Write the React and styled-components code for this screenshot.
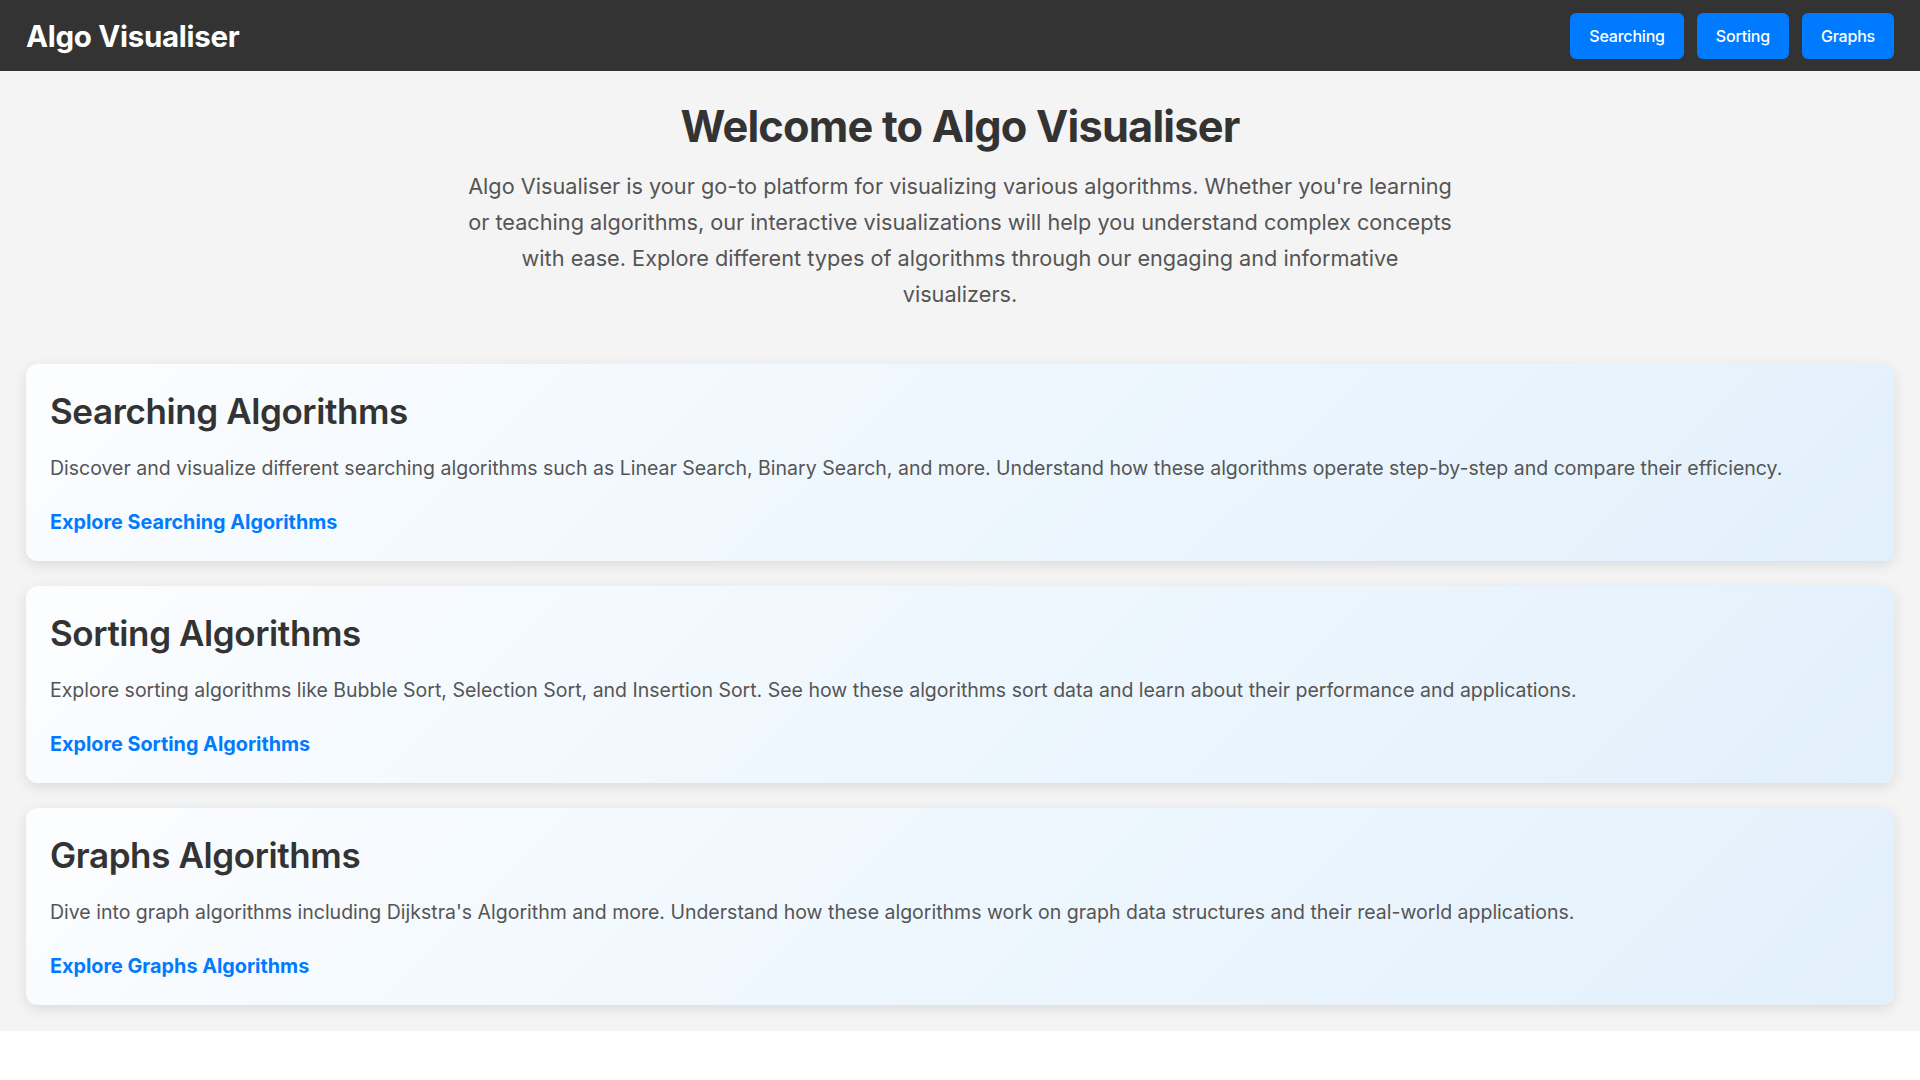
import React from "react";
import styled, { createGlobalStyle } from "styled-components";

const Global = createGlobalStyle`
  html, body { margin: 0; padding: 0; background: #ffffff; }
  body { font-family: Inter, "Noto Sans", sans-serif; color: #333; }
  * { box-sizing: border-box; }
`;

const Header = styled.header`
  height: 71px;
  background: #333333;
  display: flex;
  align-items: center;
  justify-content: space-between;
  padding: 0 26px;
`;

const Brand = styled.div`
  color: #ffffff;
  font-size: 29.5px;
  font-weight: 700;
  letter-spacing: -0.3px;
`;

const Nav = styled.nav`
  display: flex;
  gap: 13px;
`;

const NavButton = styled.button`
  background: #007bff;
  color: #ffffff;
  border: none;
  border-radius: 6px;
  height: 46px;
  padding: 0 19px;
  font-family: Inter, sans-serif;
  font-size: 16px;
  font-weight: 500;
  letter-spacing: -0.2px;
  cursor: pointer;
`;

const Main = styled.main`
  background: #f4f4f4;
  padding: 26px;
`;

const Hero = styled.section`
  text-align: center;
  margin-bottom: 52px;
`;

const Title = styled.h1`
  margin: 0;
  font-size: 43.3px;
  line-height: 58px;
  font-weight: 700;
  color: #333;
  letter-spacing: -0.8px;
`;

const Intro = styled.p`
  margin: 13px auto 0;
  max-width: 990px;
  font-size: 21.7px;
  line-height: 36px;
  color: #555;
`;

const Cards = styled.div`
  display: flex;
  flex-direction: column;
  gap: 25px;
`;

const Card = styled.article`
  background: linear-gradient(135deg, #fcfdfe 0%, #eef7fe 50%, #e2f0fc 100%);
  border-radius: 12px;
  box-shadow: 0 4px 14px rgba(0, 0, 0, 0.1);
  padding: 24px 24px 25px;
`;

const CardTitle = styled.h2`
  margin: 0;
  font-size: 35px;
  line-height: 46px;
  font-weight: 600;
  color: #333;
  letter-spacing: -0.4px;
`;

const CardText = styled.p`
  margin: 20px 0 0;
  font-size: 19.5px;
  line-height: 28px;
  color: #555;
`;

const CardLink = styled.a`
  display: inline-block;
  margin-top: 26px;
  font-size: 19.8px;
  line-height: 28px;
  font-weight: 700;
  color: #007bff;
  text-decoration: none;
`;

const sections = [
  {
    title: "Searching Algorithms",
    text: "Discover and visualize different searching algorithms such as Linear Search, Binary Search, and more. Understand how these algorithms operate step-by-step and compare their efficiency.",
    link: "Explore Searching Algorithms",
  },
  {
    title: "Sorting Algorithms",
    text: "Explore sorting algorithms like Bubble Sort, Selection Sort, and Insertion Sort. See how these algorithms sort data and learn about their performance and applications.",
    link: "Explore Sorting Algorithms",
  },
  {
    title: "Graphs Algorithms",
    text: "Dive into graph algorithms including Dijkstra's Algorithm and more. Understand how these algorithms work on graph data structures and their real-world applications.",
    link: "Explore Graphs Algorithms",
  },
];

export default function App() {
  return (
    <>
      <Global />
      <Header>
        <Brand>Algo Visualiser</Brand>
        <Nav>
          <NavButton>Searching</NavButton>
          <NavButton>Sorting</NavButton>
          <NavButton>Graphs</NavButton>
        </Nav>
      </Header>
      <Main>
        <Hero>
          <Title>Welcome to Algo Visualiser</Title>
          <Intro>
            Algo Visualiser is your go-to platform for visualizing various algorithms. Whether you're learning or teaching algorithms, our interactive visualizations will help you understand complex concepts with ease. Explore different types of algorithms through our engaging and informative visualizers.
          </Intro>
        </Hero>
        <Cards>
          {sections.map((s) => (
            <Card key={s.title}>
              <CardTitle>{s.title}</CardTitle>
              <CardText>{s.text}</CardText>
              <CardLink href="#">{s.link}</CardLink>
            </Card>
          ))}
        </Cards>
      </Main>
    </>
  );
}
